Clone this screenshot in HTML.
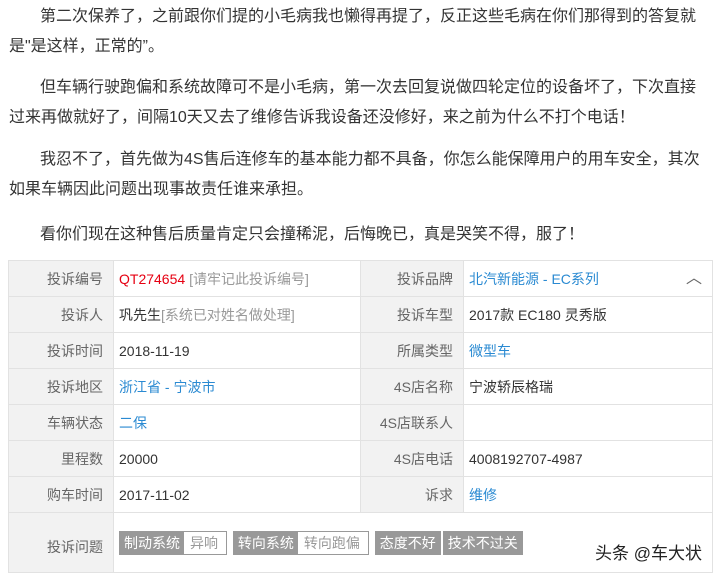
<!DOCTYPE html><html><head><style>
body{margin:0;width:714px;height:577px;background:#fff;font-family:"Liberation Sans","Noto Sans CJK SC",sans-serif;color:#333;overflow:hidden;position:relative}
p{margin:0;position:absolute;left:9px;width:700px;font-size:16px;line-height:30px;text-indent:31px}
table{position:absolute;left:8px;top:260px;border-collapse:collapse;font-size:14px;width:705px;table-layout:fixed}
td{border:1px solid #e2e2e2;height:36px;padding:0 5px;white-space:nowrap;vertical-align:middle;box-sizing:border-box}
td.l{background:#f2f2f2;color:#666;text-align:right;padding-right:10px}
.b{color:#2a8ad2}.g{color:#999}.r{color:#e60012}
.tag{display:inline-block;background:#999;color:#fff;padding:0 4px;margin-right:2px;border:1px solid #999;line-height:22px;vertical-align:middle}
.tag span{display:inline-block;background:#fff;color:#999;padding:0 8px 0 6px;margin-left:4px;margin-right:-4px;line-height:22px}
</style></head><body>
<p style="top:2px">第二次保养了，之前跟你们提的小毛病我也懒得再提了，反正这些毛病在你们那得到的答复就是"是这样，正常的”。</p>
<p style="top:73px">但车辆行驶跑偏和系统故障可不是小毛病，第一次去回复说做四轮定位的设备坏了，下次直接过来再做就好了，间隔10天又去了维修告诉我设备还没修好，来之前为什么不打个电话！</p>
<p style="top:145px">我忍不了，首先做为4S售后连修车的基本能力都不具备，你怎么能保障用户的用车安全，其次如果车辆因此问题出现事故责任谁来承担。</p>
<p style="top:220px">看你们现在这种售后质量肯定只会撞稀泥，后悔晚已，真是哭笑不得，服了！</p>
<table>
<colgroup><col style="width:105px"><col style="width:247px"><col style="width:103px"><col></colgroup>
<tr><td class="l">投诉编号</td><td><span class="r">QT274654</span> <span class="g">[请牢记此投诉编号]</span></td><td class="l">投诉品牌</td><td class="b" style="position:relative">北汽新能源 - EC系列<span style="position:absolute;right:10px;top:3px;color:#666;font-size:16px">︿</span></td></tr>
<tr><td class="l">投诉人</td><td>巩先生<span class="g">[系统已对姓名做处理]</span></td><td class="l">投诉车型</td><td>2017款 EC180 灵秀版</td></tr>
<tr><td class="l">投诉时间</td><td>2018-11-19</td><td class="l">所属类型</td><td class="b">微型车</td></tr>
<tr><td class="l">投诉地区</td><td class="b">浙江省 - 宁波市</td><td class="l">4S店名称</td><td>宁波轿辰格瑞</td></tr>
<tr><td class="l">车辆状态</td><td class="b">二保</td><td class="l">4S店联系人</td><td></td></tr>
<tr><td class="l">里程数</td><td>20000</td><td class="l">4S店电话</td><td>4008192707-4987</td></tr>
<tr><td class="l">购车时间</td><td>2017-11-02</td><td class="l">诉求</td><td class="b">维修</td></tr>
<tr><td class="l" style="height:60px;padding-top:8px">投诉问题</td><td colspan="3" style="position:relative"><span class="tag">制动系统<span>异响</span></span> <span class="tag">转向系统<span>转向跑偏</span></span> <span class="tag">态度不好</span><span class="tag">技术不过关</span><span style="position:absolute;right:10px;top:26px;font-size:17px;color:#222">头条 @车大状</span></td></tr>
</table>
</body></html>
